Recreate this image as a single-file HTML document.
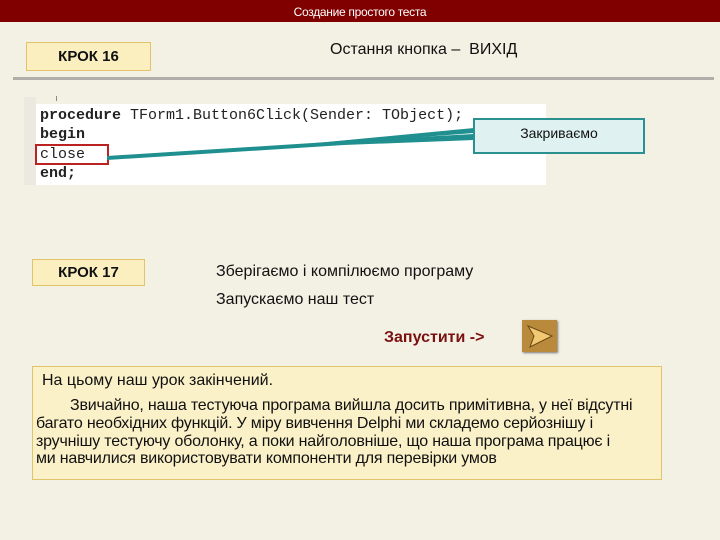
<!DOCTYPE html>
<html><head><meta charset="utf-8"><style>
body{margin:0;width:720px;height:540px;background:#f3f0e4;position:relative;overflow:hidden;font-family:"Liberation Sans","DejaVu Sans",sans-serif;}
.a{position:absolute}
.hdr{left:0;top:0;width:720px;height:22px;background:#800000;color:#fff;font-size:12px;text-align:center;line-height:24px;letter-spacing:-0.3px}
.krok{background:#fcefbf;border:1px solid #e3c36a;font-weight:bold;font-size:15px;text-align:center;color:#111}
.mono{font-family:"Liberation Mono",monospace;font-size:15px;color:#222}
</style></head><body>
<div class="a hdr">Создание простого теста</div>
<div class="a krok" style="left:26px;top:42px;width:123px;height:27px;line-height:28px">КРОК 16</div>
<div class="a" style="left:330px;top:41px;font-size:16px;color:#111">Остання кнопка –&nbsp; ВИХІД</div>
<div class="a" style="left:13px;top:77px;width:701px;height:3px;background:#b0aea8"></div>
<div class="a" style="left:24px;top:97px;width:522px;height:88px;background:#fff"></div>
<div class="a" style="left:24px;top:97px;width:522px;height:7px;background:#f3f0e4"></div>
<div class="a" style="left:24px;top:97px;width:12px;height:88px;background:#ebe9e0"></div>
<div class="a" style="left:56px;top:96px;width:1px;height:5px;background:#888"></div>
<div class="a mono" style="left:40px;top:106px;line-height:19.3px;white-space:pre"><b>procedure</b> TForm1.Button6Click(Sender: TObject);
<b>begin</b>
close
<b>end;</b></div>
<div class="a" style="left:35px;top:144px;width:70px;height:17px;border:2px solid #b22"></div>
<svg class="a" style="left:0;top:0" width="720" height="540"><polygon points="107,156 107,160 344,145 474,140 474,134 344,141" fill="#1f8f8f"/><polygon points="200,154 474,128 474,133" fill="#1f8f8f"/></svg>
<div class="a" style="left:473px;top:118px;width:168px;height:32px;background:#e0f1f1;border:2px solid #2a9090;font-size:14px;text-align:center;line-height:26px;color:#111">Закриваємо</div>
<div class="a krok" style="left:32px;top:259px;width:111px;height:25px;line-height:26px">КРОК 17</div>
<div class="a" style="left:216px;top:263px;font-size:16px;color:#111">Зберігаємо і компілюємо програму</div>
<div class="a" style="left:216px;top:291px;font-size:16px;color:#111">Запускаємо наш тест</div>
<div class="a" style="left:384px;top:329px;font-size:16px;font-weight:bold;color:#7a1010">Запустити -&gt;</div>
<div class="a" style="left:522px;top:320px;width:35px;height:32px;background:#b98a3c;box-shadow:1px 1px 2px #777"><svg width="35" height="32"><polygon points="6,6 30,16 8,27 12,16" fill="#f2c872" stroke="#6b4818"/></svg></div>
<div class="a" style="left:32px;top:366px;width:628px;height:112px;background:#fbf1c8;border:1px solid #e0c46c"></div>
<div class="a" style="left:42px;top:372px;font-size:16px;color:#111">На цьому наш урок закінчений.</div>
<div class="a" style="left:36px;top:397px;width:640px;font-size:16px;line-height:17.8px;color:#111;white-space:nowrap;letter-spacing:-0.2px"><span style="padding-left:34px"></span>Звичайно, наша тестуюча програма вийшла досить примітивна, у неї відсутні<br>багато необхідних функцій. У міру вивчення Delphi ми складемо серйознішу і<br>зручнішу тестуючу оболонку, а поки найголовніше, що наша програма працює і<br>ми навчилися використовувати компоненти для перевірки умов</div>
</body></html>
